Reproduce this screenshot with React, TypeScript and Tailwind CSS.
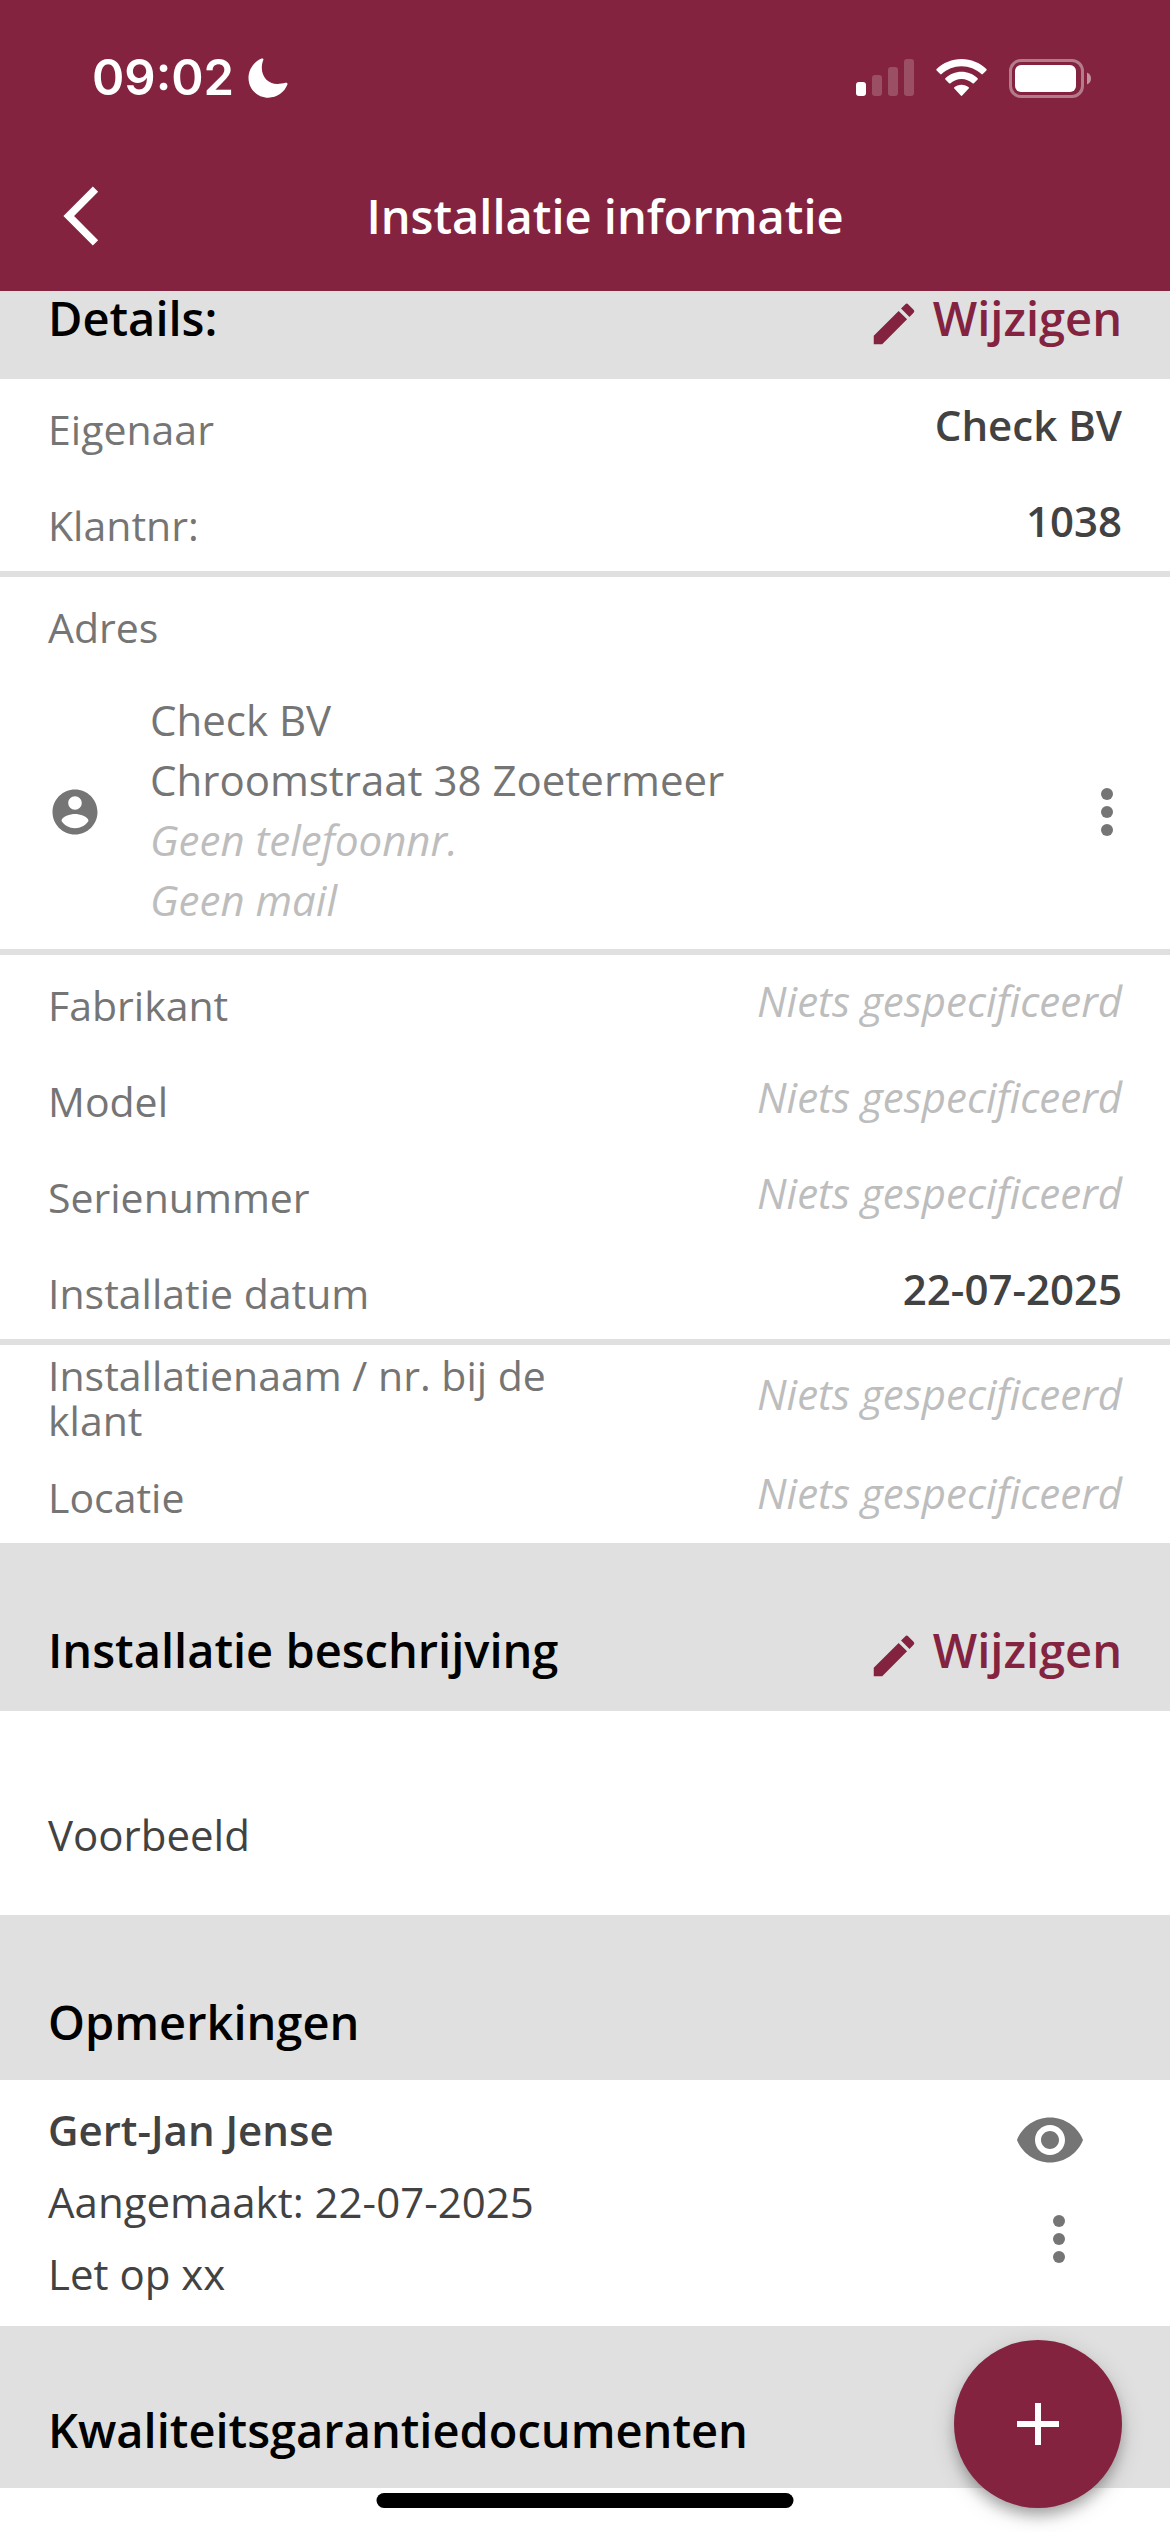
import React from "react";

type RowProps = { label: string; value?: string };

function Row({ label, value }: RowProps) {
  return (
    <div className="flex min-h-24 items-center justify-between px-12 py-1">
      <dt className="w-1/2 pt-1 text-[41px] leading-[45px] text-[#757575]">{label}</dt>
      {value ? (
        <dd className="pb-1 text-[42px] leading-[60px] font-semibold text-[#424242]">{value}</dd>
      ) : (
        <dd className="pb-1 text-[42px] leading-[60px] text-[#bdbdbd] italic">Niets gespecificeerd</dd>
      )}
    </div>
  );
}

function Divider() {
  return <hr className="h-[6px] border-0 bg-[#e0e0e0]" />;
}

function EditButton() {
  return (
    <button type="button" className="flex items-center gap-3 text-[47px] leading-[54px] font-semibold text-[#83233f]">
      <svg viewBox="0 0 24 24" className="mt-1.5 -mb-1.5 size-[54px] fill-current" aria-hidden="true">
        <path d="M3 17.25V21h3.75L17.81 9.94l-3.75-3.75L3 17.25zM20.71 7.04a1 1 0 0 0 0-1.41l-2.34-2.34a1 1 0 0 0-1.41 0l-1.83 1.83 3.75 3.75 1.83-1.83z" />
      </svg>
      Wijzigen
    </button>
  );
}

function MoreIcon() {
  return (
    <svg viewBox="0 0 24 24" className="size-[72px] fill-[#757575]" aria-hidden="true">
      <circle cx="12" cy="6" r="2" />
      <circle cx="12" cy="12" r="2" />
      <circle cx="12" cy="18" r="2" />
    </svg>
  );
}

function StatusBar() {
  return (
    <div className="flex h-[141px] items-center justify-between pt-[15px] pr-[78px] pl-[92px]">
      <div className="flex items-center gap-[14px] font-[Inter,sans-serif] text-[49px] leading-[60px] font-semibold text-white">
        <span>09:02</span>
        <svg viewBox="0 0 40 40" className="size-10 fill-white" aria-label="Niet storen">
          <path d="M13.500 0.600C14.700 0.100 15.800 0.800 15.300 2C14.400 4.400 13.800 7 13.800 10C13.800 19 20.300 26 29.300 26C32.300 26 35 25.500 37.400 24.800C38.800 24.400 39.900 25.200 39.400 26.600C36.400 34.500 28.800 39.700 20.500 39.700C9.300 39.700 0.500 31 0.500 20C0.500 11.600 5.800 4 13.500 0.600Z" />
        </svg>
      </div>
      <div className="flex items-center gap-[22px]">
        <svg viewBox="0 0 58 38" className="h-[38px] w-[58px] fill-white" aria-label="Signaal">
          <rect x="0" y="23" width="10" height="14" rx="3" />
          <rect x="16" y="16" width="10" height="21" rx="3" opacity=".2" />
          <rect x="32" y="8" width="10" height="29" rx="3" opacity=".2" />
          <rect x="48" y="0" width="10" height="37" rx="3" opacity=".2" />
        </svg>
        <svg viewBox="0 0 51 38" className="h-[38px] w-[51px] fill-white" aria-label="Wifi">
          <path d="M25.500 0C35 0 43.800 3.700 50.400 10.100Q51 10.800 50.400 11.500L46.800 15.100Q46.100 15.700 45.400 15.100C40 10 33 7.200 25.500 7.200S11 10 5.600 15.100Q4.900 15.700 4.200 15.100L.6 11.500Q0 10.800.6 10.100C7.200 3.700 16 0 25.500 0Z" />
          <path d="M25.500 12.800C31.500 12.800 37.200 15.100 41.600 19.200Q42.300 19.900 41.600 20.600L37.900 24.300Q37.200 24.900 36.500 24.300C33.500 21.600 29.700 20 25.500 20S17.500 21.600 14.500 24.300Q13.800 24.900 13.100 24.300L9.400 20.600Q8.700 19.900 9.400 19.200C13.800 15.100 19.500 12.800 25.500 12.800Z" />
          <path d="M25.500 25.700C28.200 25.700 30.700 26.600 32.700 28.200Q33.400 28.900 32.700 29.600L26.200 36.600Q25.500 37.300 24.800 36.600L18.300 29.600Q17.600 28.900 18.300 28.200C20.300 26.600 22.800 25.700 25.500 25.700Z" />
        </svg>
        <svg viewBox="0 0 83 39" className="h-[39px] w-[83px]" aria-label="Batterij">
          <rect x="1.500" y="1.500" width="72" height="36" rx="10.500" fill="none" stroke="#fff" strokeWidth="3" opacity=".4" />
          <rect x="6" y="6" width="61" height="27" rx="6" fill="#fff" />
          <path d="M78 13.500C80.500 14.500 82 16.800 82 19.500S80.500 24.500 78 25.500Z" fill="#fff" opacity=".5" />
        </svg>
      </div>
    </div>
  );
}

function SectionTitle({ children }: { children: React.ReactNode }) {
  return <h2 className="text-[47px] leading-[54px] font-semibold text-black">{children}</h2>;
}

export default function App() {
  return (
    <div className="relative min-h-screen bg-white font-['Open_Sans',sans-serif]">
      <header className="bg-[#83233f]">
        <StatusBar />
        <div className="flex h-[150px] items-center px-[60px]">
          <button type="button" aria-label="Terug" className="w-10">
            <svg viewBox="0 0 40 60" className="h-[60px] w-10" fill="none" stroke="#fff" strokeWidth="7.5" aria-hidden="true">
              <path d="M35.500 3.200L8.700 30L35.500 56.800" />
            </svg>
          </button>
          <h1 className="flex-1 text-center text-[47px] leading-[66px] font-semibold text-white">Installatie informatie</h1>
        </div>
      </header>

      <main>
        <section>
          <div className="flex items-center justify-between bg-[#e0e0e0] px-12 pb-[34px]">
            <SectionTitle>Details:</SectionTitle>
            <EditButton />
          </div>
          <dl>
            <Row label="Eigenaar" value="Check BV" />
            <Row label="Klantnr:" value="1038" />
          </dl>
          <Divider />
          <h3 className="flex h-24 items-center px-12 pt-1 text-[41px] leading-[45px] text-[#757575]">Adres</h3>
          <div className="flex items-center px-12 pt-[17px] pb-[19px]">
            <svg viewBox="0 0 24 24" className="mt-1 size-[54px] fill-[#757575]" aria-hidden="true">
              <path d="M12 2C6.480 2 2 6.480 2 12s4.480 10 10 10 10-4.480 10-10S17.520 2 12 2zm0 3c1.660 0 3 1.340 3 3s-1.340 3-3 3-3-1.340-3-3 1.340-3 3-3zm0 14.200c-2.500 0-4.710-1.280-6-3.220.03-1.990 4-3.080 6-3.080 1.990 0 5.970 1.090 6 3.080-1.290 1.940-3.500 3.220-6 3.220z" />
            </svg>
            <address className="ml-12 flex-1 text-[42px] leading-[60px] text-[#757575] not-italic">
              <p>Check BV</p>
              <p>Chroomstraat 38 Zoetermeer</p>
              <p className="text-[#bdbdbd] italic">Geen telefoonnr.</p>
              <p className="text-[#bdbdbd] italic">Geen mail</p>
            </address>
            <button type="button" aria-label="Meer opties voor adres" className="mt-1 -mr-[21px]">
              <MoreIcon />
            </button>
          </div>
          <Divider />
          <dl>
            <Row label="Fabrikant" />
            <Row label="Model" />
            <Row label="Serienummer" />
            <Row label="Installatie datum" value="22-07-2025" />
          </dl>
          <Divider />
          <dl>
            <Row label="Installatienaam / nr. bij de klant" />
            <Row label="Locatie" />
          </dl>
        </section>

        <section>
          <div className="flex items-center justify-between bg-[#e0e0e0] px-12 pt-20 pb-[34px]">
            <SectionTitle>Installatie beschrijving</SectionTitle>
            <EditButton />
          </div>
          <p className="px-12 pt-[94px] pb-[50px] text-[42px] leading-[60px] text-[#424242]">Voorbeeld</p>
        </section>

        <section>
          <div className="bg-[#e0e0e0] px-12 pt-20 pb-[31px]">
            <SectionTitle>Opmerkingen</SectionTitle>
          </div>
          <article className="flex justify-between pt-[14px] pr-[75px] pb-4 pl-12">
            <div className="text-[42px] leading-[72px] text-[#424242]">
              <h3 className="font-semibold">Gert-Jan Jense</h3>
              <p>Aangemaakt: 22-07-2025</p>
              <p>Let op xx</p>
            </div>
            <div className="flex flex-col items-end gap-[27px] pt-[10px]">
              <button type="button" aria-label="Bekijken" className="mr-[9px]">
                <svg viewBox="0 0 24 24" className="size-[72px] fill-[#757575]" aria-hidden="true">
                  <path d="M12 4.500C7 4.500 2.730 7.610 1 12c1.730 4.390 6 7.500 11 7.500s9.270-3.110 11-7.500c-1.730-4.390-6-7.500-11-7.500zM12 17c-2.760 0-5-2.240-5-5s2.240-5 5-5 5 2.240 5 5-2.240 5-5 5zm0-8c-1.660 0-3 1.340-3 3s1.340 3 3 3 3-1.340 3-3-1.340-3-3-3z" />
                </svg>
              </button>
              <button type="button" aria-label="Meer opties voor opmerking">
                <MoreIcon />
              </button>
            </div>
          </article>
        </section>

        <section>
          <div className="bg-[#e0e0e0] px-12 pt-[77px] pb-[31px]">
            <SectionTitle>Kwaliteitsgarantiedocumenten</SectionTitle>
          </div>
        </section>
      </main>

      <button
        type="button"
        aria-label="Toevoegen"
        className="fixed right-12 bottom-6 flex size-[168px] items-center justify-center rounded-full bg-[#83233f] shadow-[0_9px_15px_-3px_rgba(0,0,0,0.3),0_6px_24px_0_rgba(0,0,0,0.16)]"
      >
        <svg viewBox="0 0 24 24" className="size-[72px] fill-white" aria-hidden="true">
          <path d="M19 13h-6v6h-2v-6H5v-2h6V5h2v6h6v2z" />
        </svg>
      </button>
      <div className="fixed bottom-6 left-1/2 h-[15px] w-[417px] -translate-x-1/2 rounded-full bg-black" />
    </div>
  );
}
